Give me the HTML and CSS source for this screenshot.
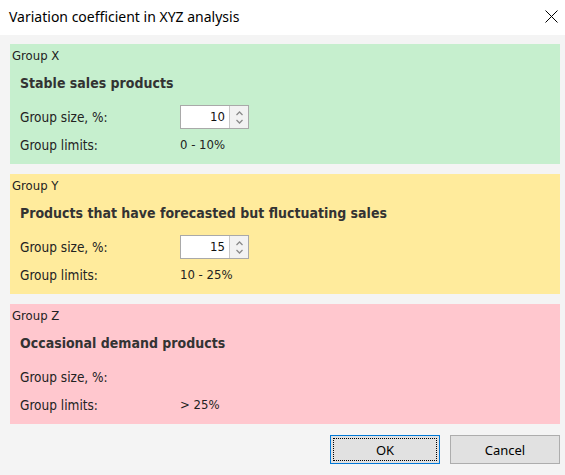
FILE: index.html
```html
<!DOCTYPE html>
<html>
<head>
<meta charset="utf-8">
<link rel="stylesheet" href="styles.css">
</head>
<body>
<div class="titlebar">
  <span class="title">Variation coefficient in XYZ analysis</span>
  <svg class="close" width="13" height="13" viewBox="0 0 13 13"><path d="M0.5 0.5L12.5 12.5M12.5 0.5L0.5 12.5" stroke="#000" stroke-width="1" fill="none"/></svg>
</div>
<div class="content">
  <section class="panel panel-x">
    <div class="caption">Group X</div>
    <div class="heading">Stable sales products</div>
    <div class="rows">
      <span class="label">Group size, %:</span>
      <div class="spinner"><span class="value">10</span><span class="arrows"><svg width="9" height="18" viewBox="0 0 9 18"><path d="M1.5 7L4.5 4L7.5 7M1.5 12L4.5 15L7.5 12" stroke="#8a8a8a" stroke-width="1.3" fill="none"/></svg></span></div>
      <span class="label">Group limits:</span>
      <span class="limits">0 - 10%</span>
    </div>
  </section>
  <section class="panel panel-y">
    <div class="caption">Group Y</div>
    <div class="heading">Products that have forecasted but fluctuating sales</div>
    <div class="rows">
      <span class="label">Group size, %:</span>
      <div class="spinner"><span class="value">15</span><span class="arrows"><svg width="9" height="18" viewBox="0 0 9 18"><path d="M1.5 7L4.5 4L7.5 7M1.5 12L4.5 15L7.5 12" stroke="#8a8a8a" stroke-width="1.3" fill="none"/></svg></span></div>
      <span class="label">Group limits:</span>
      <span class="limits">10 - 25%</span>
    </div>
  </section>
  <section class="panel panel-z">
    <div class="caption">Group Z</div>
    <div class="heading">Occasional demand products</div>
    <div class="rows">
      <span class="label">Group size, %:</span>
      <span></span>
      <span class="label">Group limits:</span>
      <span class="limits">&gt; 25%</span>
    </div>
  </section>
  <div class="buttons">
    <button class="btn btn-default"><span class="focus">OK</span></button>
    <button class="btn">Cancel</button>
  </div>
</div>
</body>
</html>
```

FILE: styles.css
```css
html, body {
  margin: 0;
  padding: 0;
}
body {
  width: 565px;
  height: 475px;
  background: #f4f4f4;
  font-family: "DejaVu Sans Condensed", "DejaVu Sans", sans-serif;
  font-size: 13px;
  color: #222;
  overflow: hidden;
}
.titlebar {
  height: 35px;
  background: #fff;
  display: flex;
  align-items: center;
  justify-content: space-between;
  padding: 0 7px 0 9px;
  box-sizing: border-box;
}
.title {
  font-family: "Noto Sans", "Open Sans", sans-serif;
  font-size: 14px;
  color: #000;
  margin-top: -3px;
}
.close {
  margin-top: -2px;
}
.content {
  padding: 9px 5px 0 10px;
  display: flex;
  flex-direction: column;
  gap: 10px;
}
.panel {
  height: 120px;
  box-sizing: border-box;
  padding: 4px 0 0 2px;
}
.panel-x { background: #c6efce; }
.panel-y { background: #ffeb9c; }
.panel-z { background: #ffc7ce; }
.caption {
  line-height: 16px;
  color: #222;
}
.heading {
  margin: 11px 0 0 8px;
  line-height: 17px;
  font-weight: bold;
  font-size: 14px;
  color: #333;
}
.rows {
  margin: 13px 0 0 8px;
  display: grid;
  grid-template-columns: 160px auto;
  grid-auto-rows: 24px;
  row-gap: 4px;
  align-items: center;
  justify-content: start;
}
.label {
  line-height: 16px;
  font-size: 13.5px;
}
.limits {
  line-height: 16px;
}
.spinner {
  width: 69px;
  height: 24px;
  box-sizing: border-box;
  border: 1px solid #a9a9a9;
  background: #fff;
  display: flex;
}
.value {
  flex: 1;
  text-align: right;
  padding-right: 4px;
  line-height: 22px;
  color: #111;
}
.arrows {
  width: 18px;
  border-left: 1px solid #c8c8c8;
  background: #f2f2f2;
  display: flex;
  align-items: center;
  justify-content: center;
}
.buttons {
  margin-top: 1px;
  display: flex;
  justify-content: flex-end;
  gap: 10px;
}
.btn {
  width: 110px;
  height: 29px;
  box-sizing: border-box;
  border: 1px solid #adadad;
  background: #e1e1e1;
  font-family: "Noto Sans", "Open Sans", sans-serif;
  font-size: 13px;
  color: #000;
  padding: 0;
  display: flex;
  align-items: center;
  justify-content: center;
}
.btn-default {
  border-color: #0078d7;
  padding: 2px;
}
.focus {
  flex: 1;
  align-self: stretch;
  display: flex;
  align-items: center;
  justify-content: center;
  border: 1px dotted #000;
}
```
